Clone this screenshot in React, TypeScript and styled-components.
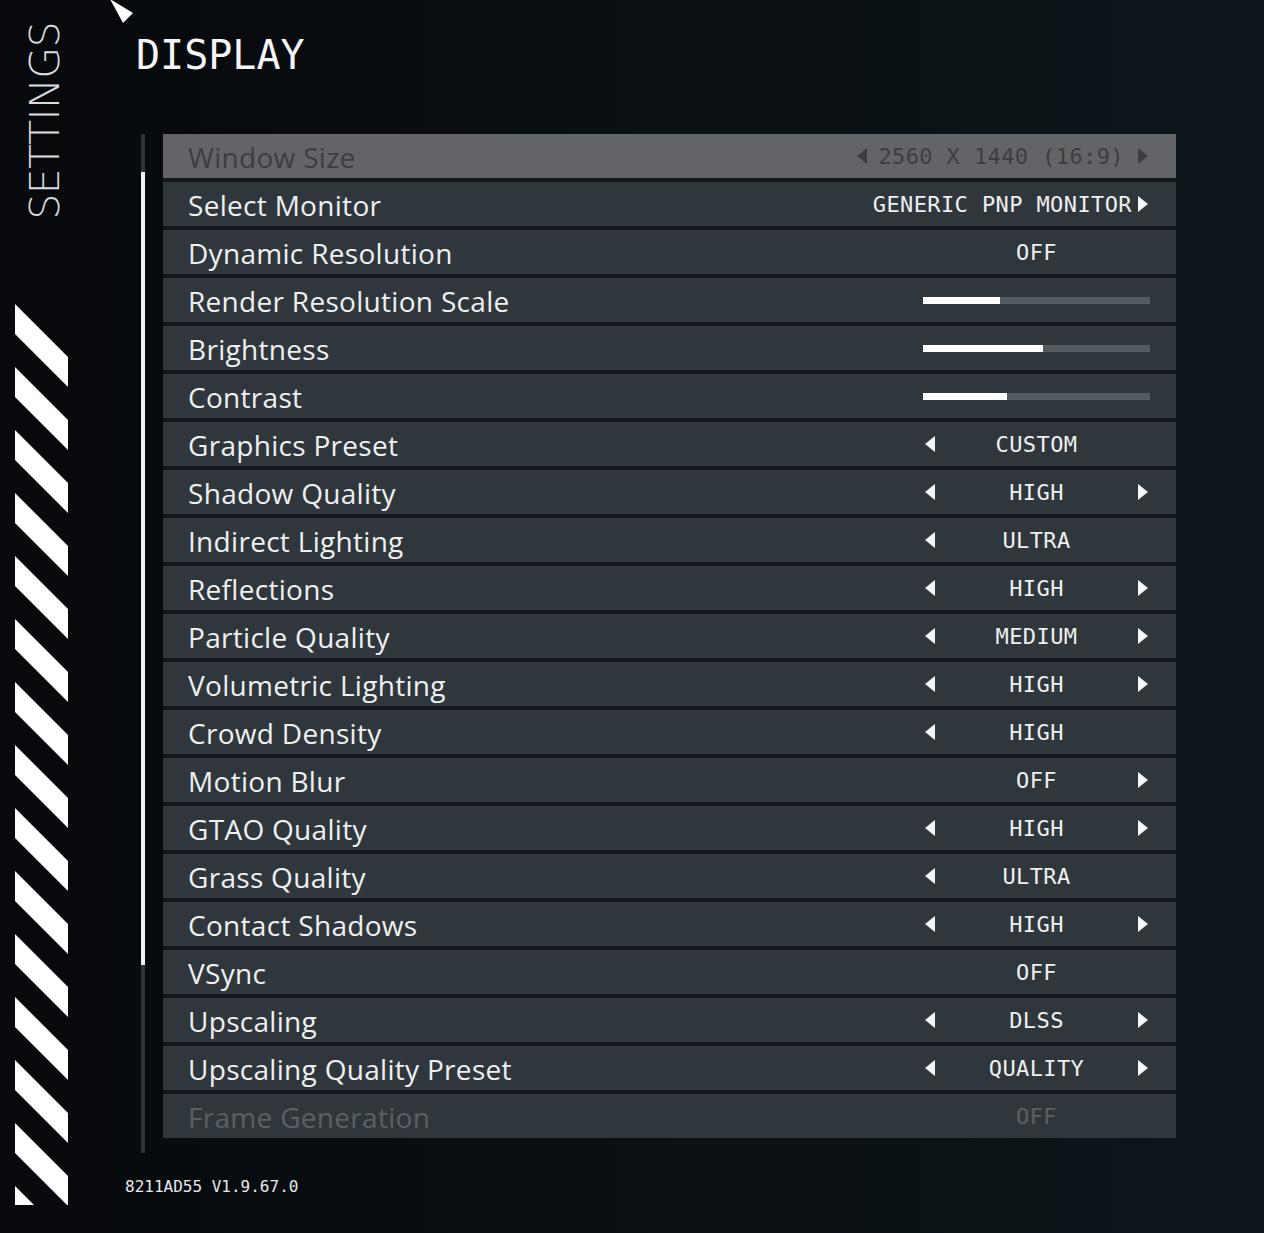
import styled, { createGlobalStyle } from "styled-components";

type Setting = {
  label: string;
  kind: "select" | "slider";
  value?: string;
  fill?: number;
  left?: boolean;
  right?: boolean;
  tone?: "normal" | "dim" | "off";
};

const settings: Setting[] = [
  { label: "Window Size", kind: "select", value: "2560 X 1440 (16:9)", left: true, right: true, tone: "dim" },
  { label: "Select Monitor", kind: "select", value: "GENERIC PNP MONITOR", right: true },
  { label: "Dynamic Resolution", kind: "select", value: "OFF" },
  { label: "Render Resolution Scale", kind: "slider", fill: 34 },
  { label: "Brightness", kind: "slider", fill: 53 },
  { label: "Contrast", kind: "slider", fill: 37 },
  { label: "Graphics Preset", kind: "select", value: "CUSTOM", left: true },
  { label: "Shadow Quality", kind: "select", value: "HIGH", left: true, right: true },
  { label: "Indirect Lighting", kind: "select", value: "ULTRA", left: true },
  { label: "Reflections", kind: "select", value: "HIGH", left: true, right: true },
  { label: "Particle Quality", kind: "select", value: "MEDIUM", left: true, right: true },
  { label: "Volumetric Lighting", kind: "select", value: "HIGH", left: true, right: true },
  { label: "Crowd Density", kind: "select", value: "HIGH", left: true },
  { label: "Motion Blur", kind: "select", value: "OFF", right: true },
  { label: "GTAO Quality", kind: "select", value: "HIGH", left: true, right: true },
  { label: "Grass Quality", kind: "select", value: "ULTRA", left: true },
  { label: "Contact Shadows", kind: "select", value: "HIGH", left: true, right: true },
  { label: "VSync", kind: "select", value: "OFF" },
  { label: "Upscaling", kind: "select", value: "DLSS", left: true, right: true },
  { label: "Upscaling Quality Preset", kind: "select", value: "QUALITY", left: true, right: true },
  { label: "Frame Generation", kind: "select", value: "OFF", tone: "off" },
];

const textColor = (tone?: string) =>
  tone === "dim" ? "#3b3e41" : tone === "off" ? "#5b6064" : "#eef0f1";

const GlobalStyle = createGlobalStyle`
  html, body {
    margin: 0;
    padding: 0;
  }
  body {
    background: linear-gradient(90deg, #07090c 0%, #0a0f13 45%, #0d161b 100%);
    font-family: "Open Sans", "Liberation Sans", sans-serif;
  }
`;

const Page = styled.div`
  position: relative;
  display: flex;
  width: 1264px;
  height: 1233px;
  overflow: hidden;
`;

const Cursor = styled.svg`
  position: absolute;
  left: 108px;
  top: -2px;
`;

const Sidebar = styled.div`
  width: 53px;
  padding-left: 15px;
  display: flex;
  flex-direction: column;
`;

const SideTitle = styled.div`
  writing-mode: vertical-rl;
  transform: rotate(180deg);
  margin-top: 22px;
  margin-left: 10px;
  font-family: "DejaVu Sans ExtraLight", "DejaVu Sans", sans-serif;
  font-weight: 200;
  font-size: 41px;
  line-height: 41px;
  letter-spacing: -0.5px;
  color: #d8dcdf;
`;

const Stripes = styled.svg`
  margin-top: 84px;
  display: block;
`;

const Main = styled.div`
  padding-left: 57px;
  display: flex;
  flex-direction: column;
`;

const Title = styled.h1`
  margin: 35px 0 0 11px;
  font-family: "DejaVu Sans Mono", monospace;
  font-weight: 400;
  font-size: 40px;
  line-height: 40px;
  letter-spacing: 0;
  color: #f4f5f6;
`;

const ListWrap = styled.div`
  display: flex;
  margin: 59px 0 0 16px;
`;

const Track = styled.div`
  width: 4px;
  height: 1019px;
  background: #2e3337;
  margin-right: 18px;
  display: flex;
  flex-direction: column;
`;

const Thumb = styled.div`
  margin-top: 38px;
  height: 793px;
  background: #f2f3f4;
`;

const Rows = styled.div`
  display: flex;
  flex-direction: column;
  gap: 4px;
  width: 1013px;
  align-self: flex-start;
  background: #12181d;
`;

const Row = styled.div<{ $tone?: string }>`
  height: 44px;
  display: flex;
  align-items: center;
  justify-content: space-between;
  padding: 0 26px 0 25px;
  background: ${(p) => (p.$tone === "dim" ? "#636467" : "#30373c")};
`;

const Label = styled.span<{ $tone?: string }>`
  font-size: 28px;
  letter-spacing: 0.3px;
  color: ${(p) => textColor(p.$tone)};
  padding-top: 2px;
`;

const Control = styled.div`
  display: flex;
  align-items: center;
  justify-content: flex-end;
  min-width: 227px;
`;

const ArrowSlot = styled.div`
  width: 14px;
  display: flex;
  justify-content: center;
`;

const Arrow = styled.div<{ $dir: "left" | "right"; $tone?: string }>`
  width: 0;
  height: 0;
  border-top: 8px solid transparent;
  border-bottom: 8px solid transparent;
  ${(p) => (p.$dir === "left" ? "border-right" : "border-left")}: 10px solid
    ${(p) => (p.$tone === "dim" ? "#3b3e41" : "#f4f5f6")};
`;

const Value = styled.span<{ $tone?: string }>`
  min-width: 199px;
  box-sizing: border-box;
  padding: ${(p) => (p.$tone === "dim" ? "0 12px 0 9px" : "0 4px")};
  text-align: center;
  white-space: nowrap;
  font-family: "DejaVu Sans Mono", monospace;
  font-size: 22px;
  letter-spacing: 0.4px;
  color: ${(p) => textColor(p.$tone)};
`;

const Slider = styled.div`
  width: 227px;
  height: 7px;
  background: #545c62;
  display: flex;
`;

const SliderFill = styled.div`
  height: 100%;
  background: #ffffff;
`;

const Version = styled.div`
  margin-top: 26px;
  font-family: "DejaVu Sans Mono", monospace;
  font-size: 16px;
  line-height: 16px;
  color: #e6e8ea;
`;

function StripeArt() {
  const polys = [];
  for (let i = 0; i < 15; i++) {
    const y = i * 63;
    polys.push(
      <polygon key={i} points={`0,${y} 53,${y + 53} 53,${y + 83} 0,${y + 30}`} fill="#ffffff" />
    );
  }
  return (
    <Stripes width="53" height="901" viewBox="0 0 53 901">
      {polys}
    </Stripes>
  );
}

function SettingRow({ s }: { s: Setting }) {
  return (
    <Row $tone={s.tone}>
      <Label $tone={s.tone}>{s.label}</Label>
      {s.kind === "slider" ? (
        <Slider>
          <SliderFill style={{ width: `${s.fill}%` }} />
        </Slider>
      ) : (
        <Control>
          <ArrowSlot>{s.left && <Arrow $dir="left" $tone={s.tone} />}</ArrowSlot>
          <Value $tone={s.tone}>{s.value}</Value>
          <ArrowSlot>{s.right && <Arrow $dir="right" $tone={s.tone} />}</ArrowSlot>
        </Control>
      )}
    </Row>
  );
}

export default function App() {
  return (
    <>
      <GlobalStyle />
      <Page>
        <Cursor width="28" height="28" viewBox="0 0 28 28">
          <polygon points="2,1 25,15 15,25" fill="#ffffff" />
        </Cursor>
        <Sidebar>
          <SideTitle>SETTINGS</SideTitle>
          <StripeArt />
        </Sidebar>
        <Main>
          <Title>DISPLAY</Title>
          <ListWrap>
            <Track>
              <Thumb />
            </Track>
            <Rows>
              {settings.map((s) => (
                <SettingRow key={s.label} s={s} />
              ))}
            </Rows>
          </ListWrap>
          <Version>8211AD55 V1.9.67.0</Version>
        </Main>
      </Page>
    </>
  );
}
